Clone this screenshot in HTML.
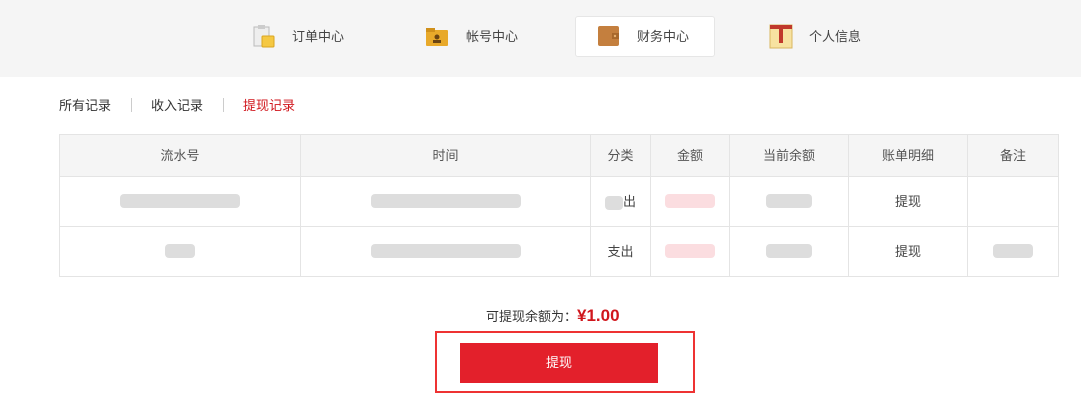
<!DOCTYPE html>
<html><head><meta charset="utf-8"><style>
*{margin:0;padding:0;box-sizing:border-box}
body{width:1081px;height:403px;background:#fff;font-family:"Liberation Sans","Noto Sans CJK SC",sans-serif;font-size:13px;color:#333;position:relative;overflow:hidden}
.top{position:absolute;left:0;top:0;width:1081px;height:77px;background:#f5f5f5}
.tab{position:absolute;top:15px;height:41px;display:flex;align-items:center;font-size:13px;color:#444}
.act{top:16px;background:#fff;border:1px solid #e6e6e6;border-radius:3px}
.ic{position:absolute;top:24px;width:24px;height:25px}
.sub{position:absolute;top:95px;left:59px;font-size:13px}
.sub span{position:absolute;white-space:nowrap}
.sep{position:absolute;top:3px;width:1px;height:14px;background:#ccc}
table{position:absolute;left:59px;top:134px;border-collapse:collapse;width:1000px}
td{border:1px solid #e4e4e4;text-align:center;font-size:13px;color:#444}
tr.h td{background:#f5f5f5;height:42px;color:#555;padding-bottom:2px}
tr.r td{height:50px;padding-bottom:2px}
.b{display:inline-block;height:14px;background:#ddd;border-radius:4px;vertical-align:middle}
.p{background:#fbdde0}
</style></head><body>
<div class="top"></div>
<div class="tab act" style="left:575px;width:140px"></div>
<svg class="ic" style="left:252px" viewBox="0 0 24 25"><rect x="2" y="3" width="15" height="19" fill="#eee" stroke="#bbb"/><rect x="6" y="1" width="7" height="4" fill="#ccc"/><rect x="10" y="12" width="12" height="11" rx="1" fill="#f5c842" stroke="#d9a520"/></svg>
<span class="tab" style="left:292px">订单中心</span>
<svg class="ic" style="left:425px" viewBox="0 0 24 25"><rect x="1" y="6" width="22" height="16" rx="1" fill="#e8a92a"/><rect x="1" y="4" width="9" height="4" fill="#d0901a"/><circle cx="12" cy="13" r="2.5" fill="#6b4412"/><rect x="8" y="16" width="8" height="3" fill="#6b4412"/></svg>
<span class="tab" style="left:466px">帐号中心</span>
<svg class="ic" style="left:597px" viewBox="0 0 24 25"><rect x="1" y="2" width="21" height="20" rx="2" fill="#c47f3e"/><rect x="15" y="9" width="7" height="6" fill="#a8682c"/><circle cx="18" cy="12" r="1.2" fill="#e6b070"/></svg>
<span class="tab" style="left:637px">财务中心</span>
<svg class="ic" style="left:769px" viewBox="0 0 24 25"><rect x="1" y="1" width="22" height="23" fill="#f7e2a0" stroke="#d9b660"/><rect x="1" y="1" width="22" height="4" fill="#c0392b"/><rect x="10" y="4" width="4" height="15" fill="#c0392b"/></svg>
<span class="tab" style="left:809px">个人信息</span>
<div class="sub"><span style="left:0">所有记录</span><i class="sep" style="left:72px"></i><span style="left:92px">收入记录</span><i class="sep" style="left:164px"></i><span style="left:184px;color:#d0161c">提现记录</span></div>
<table>
<tr class="h"><td style="width:241px">流水号</td><td style="width:290px">时间</td><td style="width:60px">分类</td><td style="width:79px">金额</td><td style="width:119px">当前余额</td><td style="width:119px">账单明细</td><td>备注</td></tr>
<tr class="r"><td><i class="b" style="width:120px"></i></td><td><i class="b" style="width:150px"></i></td><td><i class="b" style="width:18px"></i>出</td><td><i class="b p" style="width:50px"></i></td><td><i class="b" style="width:46px"></i></td><td>提现</td><td></td></tr>
<tr class="r"><td><i class="b" style="width:30px"></i></td><td><i class="b" style="width:150px"></i></td><td>支出</td><td><i class="b p" style="width:50px"></i></td><td><i class="b" style="width:46px"></i></td><td>提现</td><td><i class="b" style="width:40px"></i></td></tr>
</table>
<div style="position:absolute;left:486px;top:306px;font-size:13px">可提现余额为：<b style="color:#d0161c;font-size:17px">¥1.00</b></div>
<div style="position:absolute;left:435px;top:331px;width:260px;height:62px;border:2px solid #e33"></div>
<div style="position:absolute;left:460px;top:343px;width:198px;height:40px;background:#e3202b;color:#fff;text-align:center;line-height:40px;font-size:13px">提现</div>
</body></html>
